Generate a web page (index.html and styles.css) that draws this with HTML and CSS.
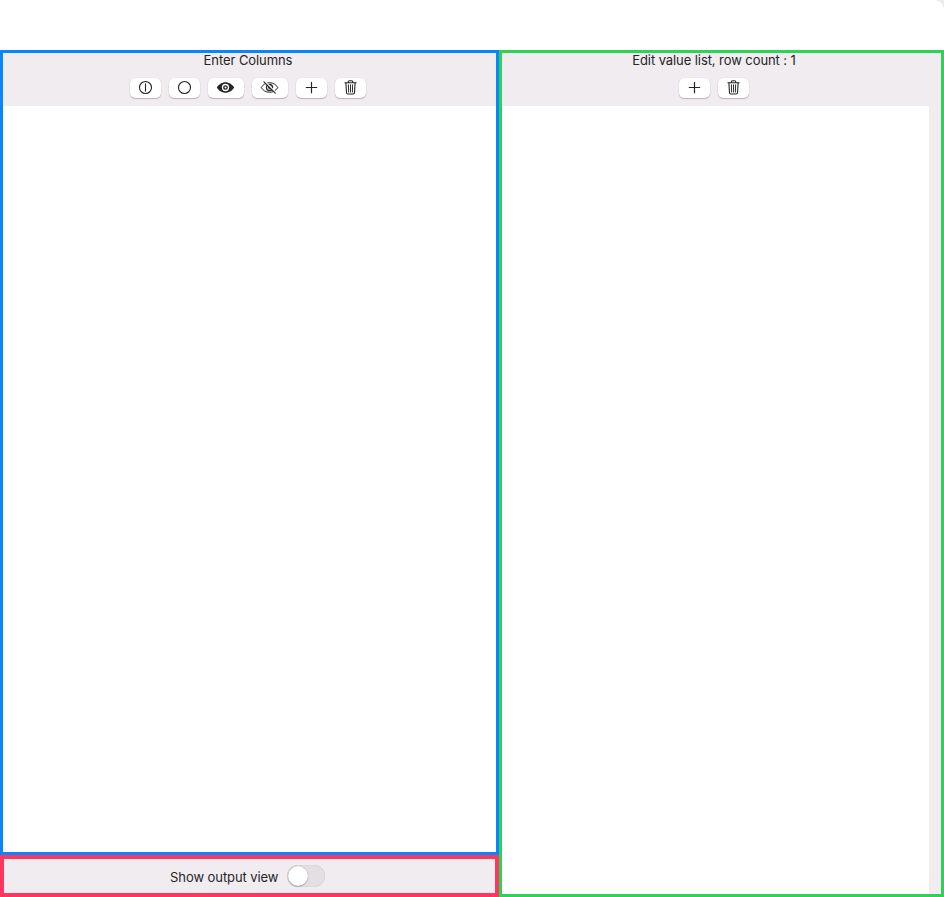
FILE: index.html
```html
<!DOCTYPE html>
<html lang="en">
<head>
<meta charset="utf-8">
<title>Columns editor</title>
<link rel="stylesheet" href="styles.css">
</head>
<body>
<svg class="symbols" aria-hidden="true">
  <symbol id="plus" viewBox=".5 .5 15 15"><path d="M8 2.8v10.4M2.8 8h10.4" fill="none" stroke="currentColor" stroke-width="1.2" stroke-linecap="round"/></symbol>
  <symbol id="trash" viewBox=".5 .5 15 15"><g fill="none" stroke="currentColor" stroke-linecap="round" stroke-linejoin="round"><path d="M2.4 3.3h11.2M5.8 3.1V2.2q0-1 1-1h2.4q1 0 1 1v.9" stroke-width="1.1"/><path d="M3.4 3.5l.6 9.8q.1 1.2 1.3 1.2h5.4q1.2 0 1.3-1.2l.6-9.8" stroke-width="1.1"/><path d="M5.9 5.3l.2 7.3M8 5.3v7.3M10.1 5.3l-.2 7.3" stroke-width=".95"/></g></symbol>
</svg>
<div class="window">
  <header class="titlebar"></header>
  <main class="workspace">
    <div class="left">
      <section class="pane columns">
        <div class="pane-header">
          <h1 class="title">Enter Columns</h1>
          <div class="toolbar">
            <button class="btn" aria-label="Enable"><svg class="icon" viewBox=".5 .5 15 15"><circle cx="8" cy="8" r="6" fill="none" stroke="currentColor" stroke-width="1.1"/><path d="M8 4.4v7.2" stroke="currentColor" stroke-width="1.1" stroke-linecap="round"/></svg></button>
            <button class="btn" aria-label="Disable"><svg class="icon" viewBox=".5 .5 15 15"><circle cx="8" cy="8" r="6" fill="none" stroke="currentColor" stroke-width="1.1"/></svg></button>
            <button class="btn btn-wide" aria-label="Show"><svg class="icon icon-eye" viewBox="-.5 .5 19 15"><path d="M.3 8C2 5.2 5.2 2.7 9 2.7S16 5.2 17.7 8C16 10.8 12.8 13.3 9 13.3S2 10.8 .3 8z" fill="currentColor"/><circle cx="9" cy="8" r="3" fill="none" stroke="#fff" stroke-width="1.3"/><circle cx="9" cy="8" r="1" fill="#fff"/></svg></button>
            <button class="btn btn-wide" aria-label="Hide"><svg class="icon icon-eye" viewBox="-.5 .5 19 15"><path d="M.7 8C2.2 5.4 5.2 3.2 9 3.2S15.8 5.4 17.3 8C15.8 10.6 12.8 12.8 9 12.8S2.2 10.6 .7 8z" fill="none" stroke="currentColor" stroke-width="1"/><circle cx="9" cy="8" r="3" fill="none" stroke="currentColor" stroke-width="1.3"/><circle cx="9" cy="8" r="1.4" fill="currentColor"/><path d="M4.3 2l11 11" stroke="#fff" stroke-width="1.4"/><path d="M3.4 2.4l11.4 11.2" stroke="currentColor" stroke-width="1.1" stroke-linecap="round"/></svg></button>
            <button class="btn" aria-label="Add column"><svg class="icon"><use href="#plus"/></svg></button>
            <button class="btn" aria-label="Delete column"><svg class="icon"><use href="#trash"/></svg></button>
          </div>
        </div>
        <div class="list"></div>
      </section>
      <section class="output">
        <span class="output-label">Show output view</span>
        <span class="switch" role="switch" aria-checked="false"><span class="knob"></span></span>
      </section>
    </div>
    <section class="pane values">
      <div class="pane-header">
        <h2 class="title">Edit value list, row count : 1</h2>
        <div class="toolbar">
          <button class="btn" aria-label="Add row"><svg class="icon"><use href="#plus"/></svg></button>
          <button class="btn" aria-label="Delete row"><svg class="icon"><use href="#trash"/></svg></button>
        </div>
      </div>
      <div class="list"></div>
    </section>
  </main>
</div>
</body>
</html>
```
FILE: styles.css
```css
* { box-sizing: border-box; }
body {
  margin: 0;
  background: #ececec;
  color: #262526;
  font: 13px/16px Inter, "Liberation Sans", sans-serif;
  letter-spacing: -.08px;
}
.symbols { display: none; }
.window {
  display: flex;
  flex-direction: column;
  height: 897px;
  overflow: hidden;
  background: #fff;
  border-top-right-radius: 10px;
}
.titlebar { flex: 0 0 50px; }
.workspace {
  flex: 1;
  display: grid;
  grid-template-columns: 499px 1fr;
}
.left { display: grid; grid-template-rows: 1fr 42px; }
.pane { display: flex; flex-direction: column; }
.columns { border: 3px solid #0a84ff; }
.values {
  border: 3px solid #30d158;
  padding-right: 12px;
  background: #f1ecf0;
}
.pane-header {
  flex: 0 0 53px;
  padding-right: 3px;
  background: #f1ecf0;
  text-align: center;
}
.title {
  margin: 0;
  font-size: 13px;
  font-weight: 400;
  line-height: 14px;
}
.list { flex: 1; background: #fff; }
.toolbar {
  display: flex;
  justify-content: center;
  gap: 7.5px;
  margin-top: 11px;
}
.btn {
  display: flex;
  align-items: center;
  justify-content: center;
  width: 31.5px;
  height: 20px;
  padding: 0 .5px 1px 0;
  border: 0;
  border-radius: 5px;
  background: #fff;
  box-shadow: 0 0 1px rgba(0,0,0,.2), 0 1px 1px rgba(0,0,0,.22);
  color: #262526;
}
.btn-wide { width: 36.5px; }
.icon { width: 15px; height: 15px; }
.icon-eye { width: 19px; }
.output {
  display: flex;
  align-items: center;
  justify-content: center;
  gap: 8.5px;
  padding-right: 4px;
  border: 4px solid #ff375f;
  background: #f1ecf0;
}
.output-label { padding-top: 1px; }
.switch {
  width: 38px;
  height: 22px;
  border-radius: 11px;
  background: #e4dfe3;
  box-shadow: inset 0 0 1px rgba(0,0,0,.25);
}
.knob {
  display: block;
  width: 20px;
  height: 20px;
  margin: 1px;
  border-radius: 50%;
  background: #fff;
  box-shadow: 0 0 1px rgba(0,0,0,.4), 0 1px 1px rgba(0,0,0,.2);
}
```
